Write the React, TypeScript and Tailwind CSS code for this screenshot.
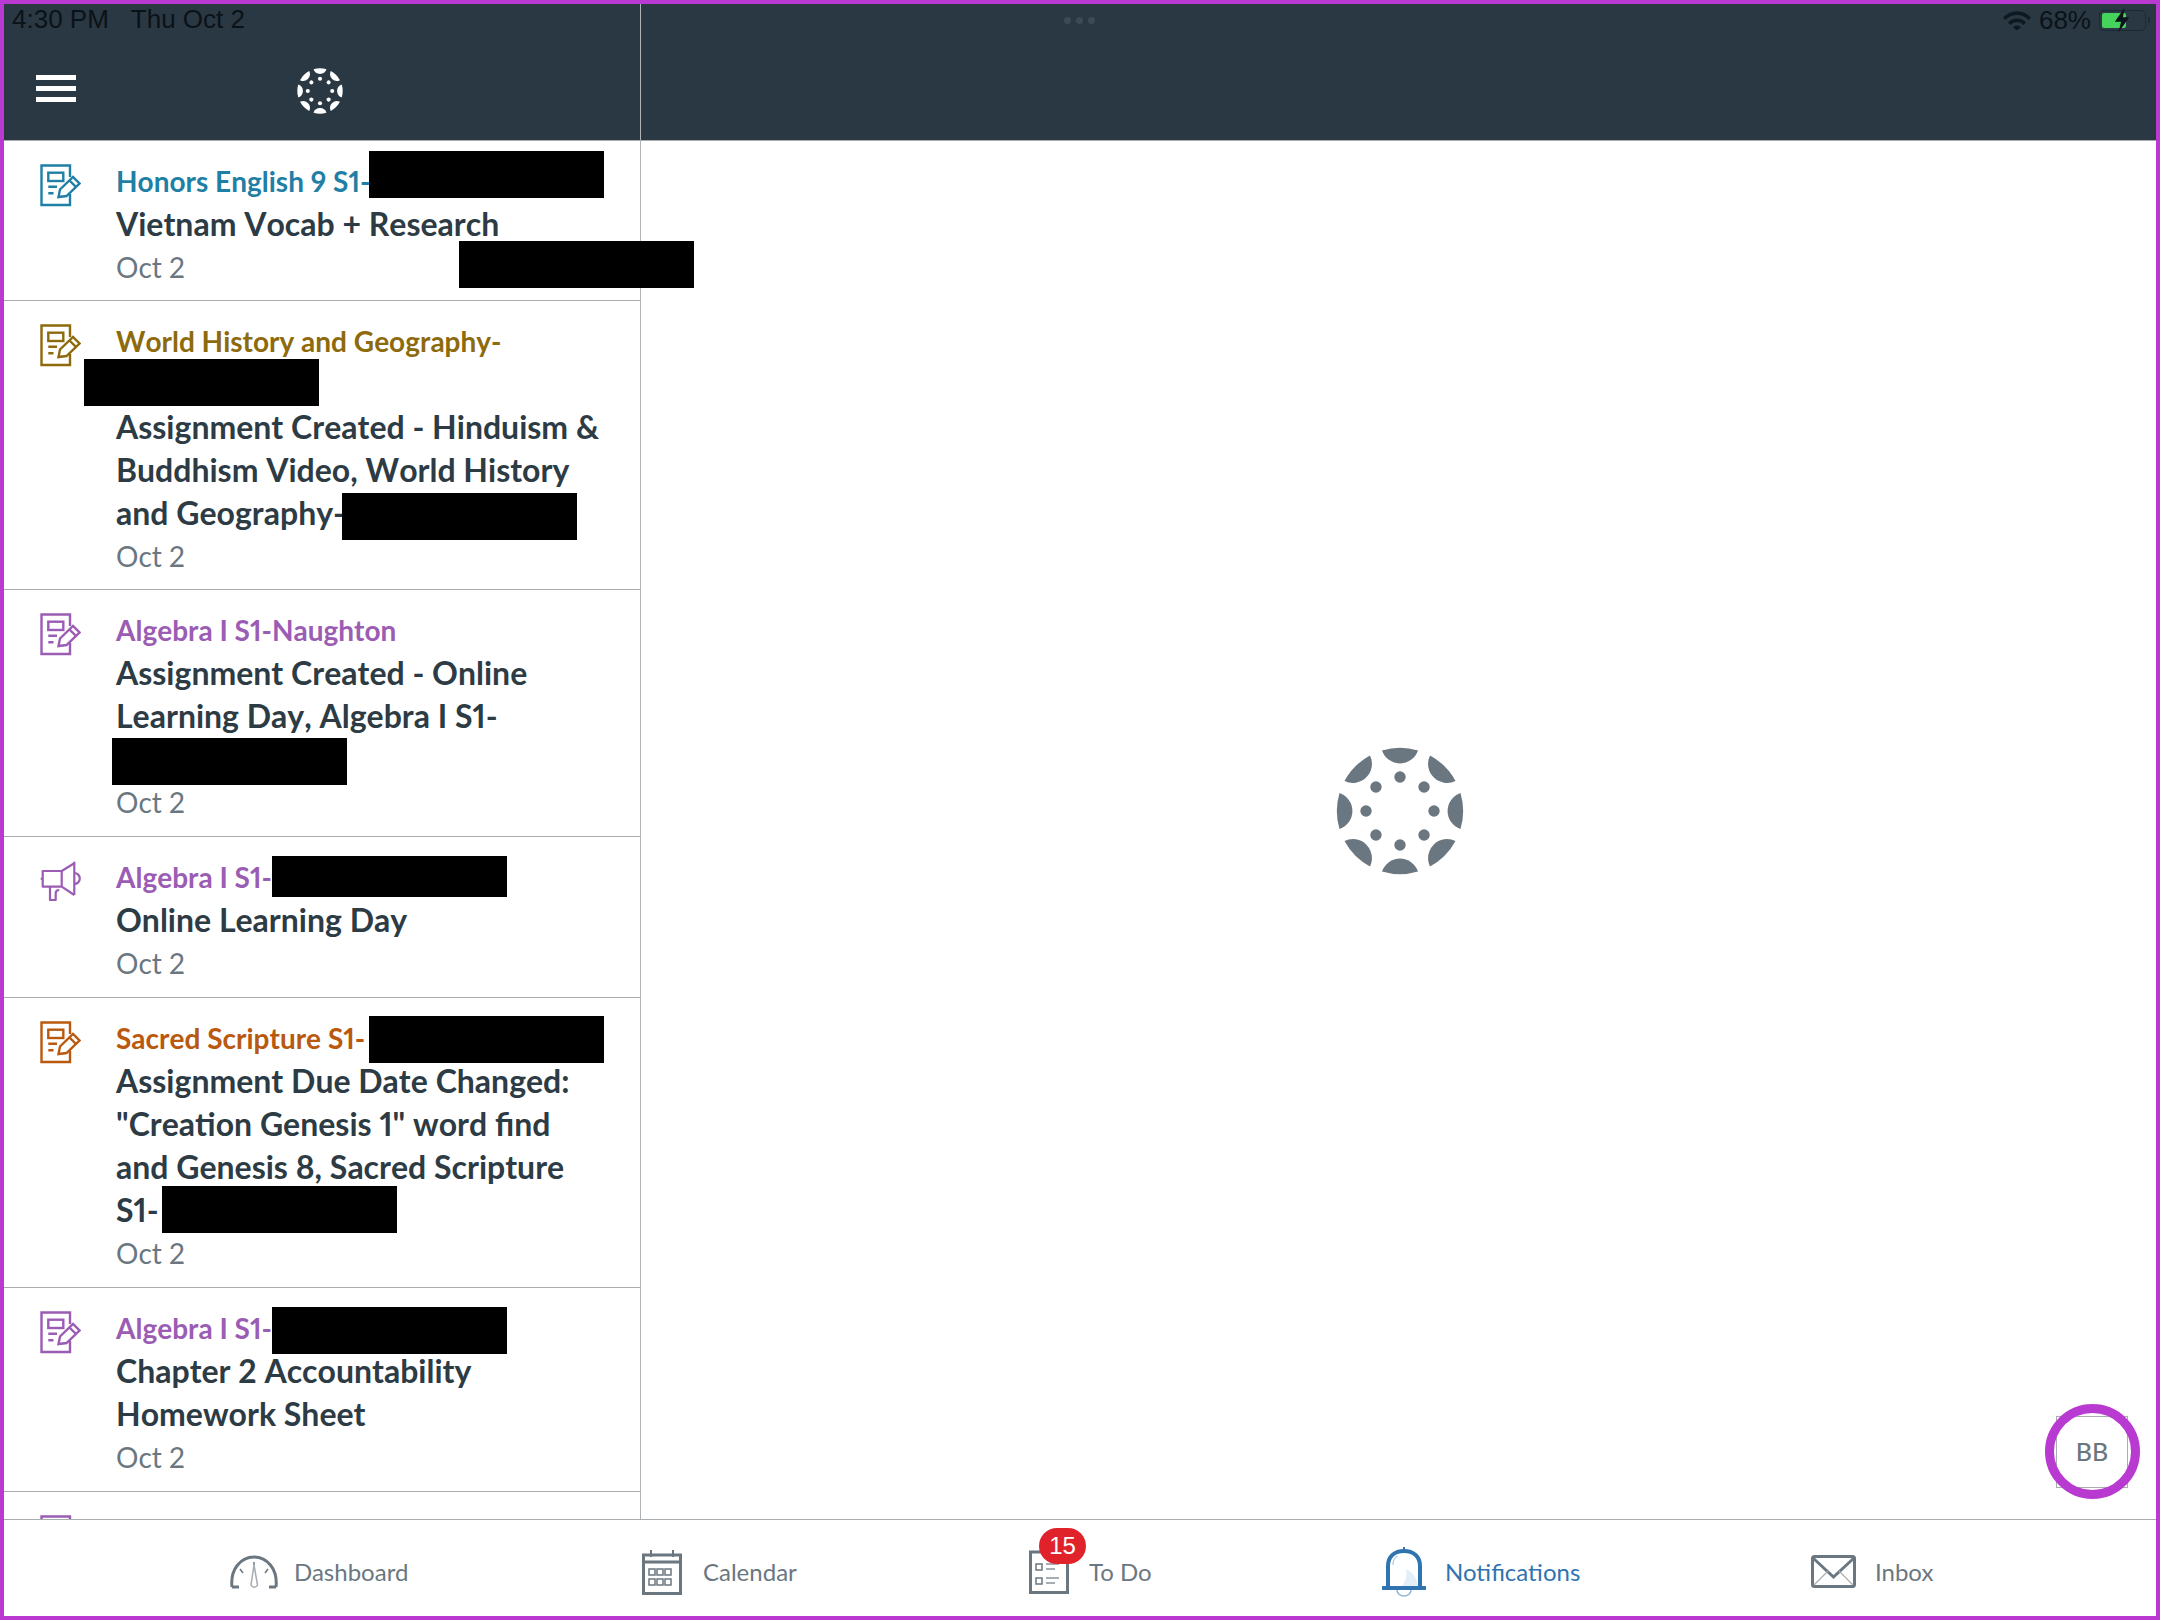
import React from "react";

function Petals({ color, size }: { color: string; size: number }) {
  const angles = [0, 45, 90, 135, 180, 225, 270, 315];
  return (
    <svg width={size} height={size} viewBox="-64 -64 128 128" fill={color}>
      {angles.map((a) => (
        <g key={a} transform={`rotate(${a})`}>
          <path d="M-18 -60.5A63 63 0 0 1 18 -60.5A19 19 0 0 1 -18 -60.5Z" />
          <circle cx="0" cy="-34" r="5.7" />
        </g>
      ))}
    </svg>
  );
}

function AssignmentIcon({ color }: { color: string }) {
  return (
    <svg width="41" height="43" viewBox="0 0 41 43" fill="none" stroke={color} strokeWidth="2.4">
      <path d="M30 13V1.5H1.5V41H30V30" />
      <rect x="8.3" y="8.7" width="15" height="8.3" />
      <path d="M8.3 22.7H17M8.3 29.3H13.5" />
      <path d="M18.5 33L20 25.5L33 13L39.5 19.5L26.5 32Z" />
      <path d="M29.5 16.5L36 23" />
    </svg>
  );
}

function MegaphoneIcon({ color }: { color: string }) {
  return (
    <svg width="42" height="42" viewBox="0 0 42 42" fill="none" stroke={color} strokeWidth="2.2" strokeLinejoin="round">
      <path d="M34.3 1.7V35" />
      <path d="M34.3 3.3L21.7 11H2.7V26.7H21.7L34.3 35" />
      <path d="M21.7 11V26.7" />
      <path d="M0.7 18.8H2.7" />
      <path d="M34.3 13A5.5 5.5 0 0 1 34.3 24" />
      <path d="M10 26.7V40H15.7V33.3C15.7 31 17 30 19.3 30" />
    </svg>
  );
}

function Redact({ className }: { className: string }) {
  return <span className={`relative inline-block h-[47px] w-[235px] bg-black align-middle -my-[10px] ${className}`} />;
}

function Row({
  color,
  course,
  title,
  icon = "a",
  pad = "pb-[11px]",
}: {
  color: string;
  course: React.ReactNode;
  title: React.ReactNode;
  icon?: string;
  pad?: string;
}) {
  return (
    <div className={`flex border-b border-[#a9adb0] bg-white pl-[36px] pr-[36px] pt-[20px] ${pad}`}>
      <div className="w-[76px] shrink-0 pt-[3px]">
        {icon === "a" ? <AssignmentIcon color={color} /> : <MegaphoneIcon color={color} />}
      </div>
      <div className="min-w-0 flex-1 [font-kerning:none] proportional-nums">
        <div className="text-[28px] leading-[41px] font-bold whitespace-nowrap" style={{ color }}>
          {course}
        </div>
        <div className="text-[32px] leading-[43px] font-bold text-[#2d3b45]">{title}</div>
        <div className="text-[28px] leading-[45px] text-[#6b7780]">Oct 2</div>
      </div>
    </div>
  );
}

function Gauge() {
  return (
    <svg width="48" height="34" viewBox="0 0 48 34" fill="none" stroke="#6b7780" strokeWidth="3">
      <path d="M2 32C0 14 11 2 24 2C37 2 48 14 46 32" />
      <path d="M2 32H9M39 32H46" />
      <path d="M24 10L21 30A3.5 3.5 0 0 0 27.5 30Z" stroke="#a6acb1" strokeWidth="1.5" />
      <path d="M10 14L13 18M38 14L35 18M24 7V10" strokeWidth="1.5" />
    </svg>
  );
}

function CalendarIcon() {
  return (
    <svg width="40" height="46" viewBox="0 0 40 46" fill="none" stroke="#6b7780">
      <rect x="1.5" y="6" width="37" height="38.5" strokeWidth="3" />
      <path d="M1.5 13H38.5" strokeWidth="3" />
      <path d="M9 1V8M31 1V8" strokeWidth="2" />
      {[9, 17, 25].map((x) => (
        <g key={x}>
          <rect x={x - 2} y="20" width="6" height="6" strokeWidth="1.5" />
          <rect x={x - 2} y="30" width="6" height="6" strokeWidth="1.5" />
        </g>
      ))}
    </svg>
  );
}

function TodoIcon() {
  return (
    <svg width="40" height="44" viewBox="0 0 40 44" fill="none" stroke="#6b7780">
      <path d="M1.5 2V42.5H38.5V2H1.5Z" strokeWidth="3" />
      <rect x="7" y="14" width="6" height="6" strokeWidth="1.5" />
      <rect x="7" y="28" width="6" height="6" strokeWidth="1.5" />
      <path d="M17 14H30M17 19H26M17 28H30M17 33H26" strokeWidth="2" stroke="#a6acb1" />
    </svg>
  );
}

function BellIcon() {
  return (
    <svg width="44" height="50" viewBox="0 0 44 50" fill="none" stroke="#2f74b0">
      <path d="M24 22C32 26 35 32 36 39H20C24 34 25 28 24 22Z" fill="#e3eff8" stroke="none" />
      <path d="M6 40V19C6 9 13 4 22 4C31 4 38 9 38 19V40" strokeWidth="4" />
      <path d="M0 41H44" strokeWidth="4" />
      <path d="M22 0V4" strokeWidth="2" />
      <path d="M15 43A7 6 0 0 0 29 43" strokeWidth="1.5" stroke="#8fb6d6" />
      <path d="M11 18C11 13 13 10 16 9" strokeWidth="1.2" stroke="#a9c9e2" />
    </svg>
  );
}

function InboxIcon() {
  return (
    <svg width="45" height="33" viewBox="0 0 45 33" fill="none" stroke="#6b7780">
      <rect x="1.5" y="1.5" width="42" height="30" rx="2" strokeWidth="3" />
      <path d="M2 3L22.5 22L43 3" strokeWidth="3" />
      <path d="M3 30L17 16M42 30L28 16" strokeWidth="1.2" stroke="#a6acb1" />
    </svg>
  );
}

export default function App() {
  return (
    <div
      className="relative flex h-[1620px] w-[2160px] flex-col overflow-hidden border-[4px] border-[#b93ad0] bg-white"
      style={{ fontFamily: "Lato, 'Noto Sans', sans-serif" }}
    >
      {/* header */}
      <div className="flex h-[137px] shrink-0 border-b border-[#a9adb0] bg-[#2a3843]">
        <div className="flex w-[637px] shrink-0 flex-col border-r border-[#aeb3b7]">
          <div
            className="flex h-[30px] items-center gap-[22px] pl-[8px] text-[26px] text-[#0a1218]"
            style={{ fontFamily: "'Liberation Sans', sans-serif" }}
          >
            <span>4:30 PM</span>
            <span>Thu Oct 2</span>
          </div>
          <div className="flex flex-1 items-center pt-[2px] pl-[32px]">
            <div className="flex w-[40px] flex-col gap-[6px]">
              <div className="h-[5px] bg-white" />
              <div className="h-[5px] bg-white" />
              <div className="h-[5px] bg-white" />
            </div>
            <div className="ml-[221px] mt-[6px]">
              <Petals color="#ffffff" size={46} />
            </div>
          </div>
        </div>
        <div className="flex h-[32px] flex-1 items-center pl-[423px] pr-[6px]">
          <div className="flex items-center gap-[5px]">
            <span className="h-[7px] w-[7px] rounded-full bg-[#3d4a54]" />
            <span className="h-[7px] w-[7px] rounded-full bg-[#3d4a54]" />
            <span className="h-[7px] w-[7px] rounded-full bg-[#3d4a54]" />
          </div>
          <div
            className="ml-auto flex items-center gap-[8px] text-[26px] text-[#0a1218]"
            style={{ fontFamily: "'Liberation Sans', sans-serif" }}
          >
            <svg width="28" height="20" viewBox="0 0 28 20" fill="#0d1820">
              <path d="M0 7.5A19 19 0 0 1 28 7.5L25.5 10A15.5 15.5 0 0 0 2.5 10Z" />
              <path d="M5 12.5A12 12 0 0 1 23 12.5L20.5 15A8.5 8.5 0 0 0 7.5 15Z" />
              <path d="M10 17.2A5.5 5.5 0 0 1 18 17.2L14 20.5Z" />
            </svg>
            <span>68%</span>
            <span className="flex items-center">
              <span className="relative flex h-[21px] w-[47px] items-center rounded-[5px] border border-[#1d2a33] p-[2px]">
                <span className="h-full w-[24px] rounded-[2px] bg-[#45d35c]" />
                <svg className="absolute left-[13px] top-[-4px]" width="18" height="26" viewBox="0 0 20 28" fill="#0b141b">
                  <path d="M13 0L2 16H9L6 28L18 11H11Z" />
                </svg>
              </span>
              <span className="ml-[2px] h-[6px] w-[2px] bg-[#1d2a33]" />
            </span>
          </div>
        </div>
      </div>

      {/* body */}
      <div className="flex min-h-0 flex-1">
        <div className="w-[637px] shrink-0 overflow-hidden border-r border-[#aeb3b7]">
          <Row
            color="#1f7fa5"
            pad="pb-[10px]"
            course={
              <>
                Honors English 9 S1-
                <Redact className="-top-[10px] -left-[1px]" />
              </>
            }
            title="Vietnam Vocab + Research"
          />
          <Row
            color="#8d6a0c"
            pad="pb-[10px]"
            course={
              <>
                World History and Geography-
                <div className="h-[43px] leading-[43px]">
                  <Redact className="-left-[32px] -top-[4px]" />
                </div>
              </>
            }
            title={
              <>
                Assignment Created - Hinduism &amp; Buddhism Video, World History and Geography-
                <Redact className="top-[0px] -left-[3px]" />
              </>
            }
          />
          <Row
            color="#9b5cb4"
            course="Algebra I S1-Naughton"
            title={
              <>
                Assignment Created - Online Learning Day, Algebra I S1-
                <br />
                <Redact className="-left-[4px] -top-[1px]" />
              </>
            }
          />
          <Row
            color="#9b5cb4"
            icon="m"
            course={
              <>
                Algebra I S1-
                <Redact className="-top-[4px] !h-[41px]" />
              </>
            }
            title="Online Learning Day"
          />
          <Row
            color="#b9590f"
            course={
              <>
                Sacred Scripture S1-
                <Redact className="-top-[2px] left-[4px]" />
              </>
            }
            title={
              <>
                Assignment Due Date Changed: "Creation Genesis 1" word find and Genesis 8, Sacred Scripture S1-
                <Redact className="-top-[4px] left-[3px]" />
              </>
            }
          />
          <Row
            color="#9b5cb4"
            course={
              <>
                Algebra I S1-
                <Redact className="-top-[1px]" />
              </>
            }
            title="Chapter 2 Accountability Homework Sheet"
          />
          <div className="pl-[36px] pt-[23px]">
            <AssignmentIcon color="#9b5cb4" />
          </div>
        </div>

        <div className="flex flex-1 items-center justify-center pb-[38px] pl-[3px]">
          <Petals color="#6b7780" size={128} />
        </div>
      </div>

      {/* tab bar */}
      <div className="grid h-[97px] shrink-0 grid-cols-[412px_387px_353px_429px_1fr] items-center border-t border-[#a9adb0] bg-white pl-[226px] pt-[7px] text-[24px] text-[#6b7780]">
        <div className="flex items-center gap-[16px]">
          <Gauge />
          <span>Dashboard</span>
        </div>
        <div className="flex items-center gap-[21px]">
          <CalendarIcon />
          <span>Calendar</span>
        </div>
        <div className="relative flex items-center gap-[20px]">
          <TodoIcon />
          <span>To Do</span>
          <span
            className="absolute left-[10px] -top-[22px] flex h-[36px] w-[47px] items-center justify-center rounded-full bg-[#e0232b] text-[24px] text-white"
            style={{ fontFamily: "'Liberation Sans', sans-serif" }}
          >
            15
          </span>
        </div>
        <div className="flex items-center gap-[19px] text-[#2f74b0]">
          <BellIcon />
          <span>Notifications</span>
        </div>
        <div className="flex items-center gap-[19px]">
          <InboxIcon />
          <span>Inbox</span>
        </div>
      </div>

      {/* overlays */}
      <div className="absolute left-[455px] top-[237px] h-[47px] w-[235px] bg-black" />
      <div className="absolute left-[2052px] top-[1412px] flex h-[72px] w-[72px] items-center justify-center border border-[#a9adb0] text-[25px] font-medium text-[#6b7780]">
        BB
      </div>
      <div className="absolute left-[2041px] top-[1400px] h-[95px] w-[95px] rounded-full border-[9px] border-[#b93ad0]" />
    </div>
  );
}
